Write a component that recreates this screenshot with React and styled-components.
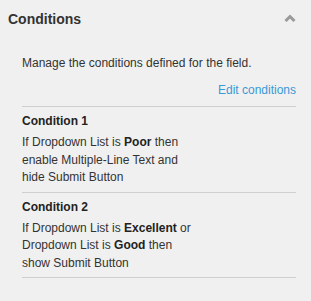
import React from 'react';
import styled, { createGlobalStyle } from 'styled-components';

const GlobalStyle = createGlobalStyle`
  body {
    margin: 0;
    background: #f0f0f0;
    font-family: "Liberation Sans", Arial, sans-serif;
    color: #333;
  }
`;

const Panel = styled.div`
  width: 311px;
  min-height: 301px;
  background: #f0f0f0;
`;

const Header = styled.div`
  display: flex;
  justify-content: space-between;
  align-items: flex-start;
  padding: 11px 15px 0 8px;
`;

const Title = styled.h2`
  margin: 0;
  font-size: 14px;
  line-height: 17px;
  font-weight: bold;
  color: #333;
`;

const Toggle = styled.svg`
  margin-top: 3px;
  display: block;
`;

const Body = styled.div`
  padding: 0 15px 0 22px;
`;

const Description = styled.p`
  margin: 27px 0 0;
  font-size: 12px;
  line-height: 17px;
`;

const Actions = styled.div`
  display: flex;
  justify-content: flex-end;
  margin-top: 10px;
`;

const EditLink = styled.a`
  font-size: 12px;
  line-height: 17px;
  color: #3b99d4;
  text-decoration: none;
  cursor: pointer;
`;

const List = styled.div`
  margin-top: 7px;
  border-bottom: 1px solid #cfcfcf;
`;

const Item = styled.div`
  border-top: 1px solid #cfcfcf;
  padding: 6px 0 5px;
`;

const ItemTitle = styled.div`
  font-size: 12px;
  line-height: 17px;
  font-weight: bold;
  color: #222;
`;

const ItemText = styled.div`
  margin-top: 4px;
  font-size: 12px;
  line-height: 17.5px;
  max-width: 175px;

  strong {
    color: #222;
  }
`;

const conditions = [
  {
    id: 1,
    text: (
      <>
        If Dropdown List is <strong>Poor</strong> then enable Multiple-Line Text and hide Submit Button
      </>
    ),
  },
  {
    id: 2,
    text: (
      <>
        If Dropdown List is <strong>Excellent</strong> or Dropdown List is <strong>Good</strong> then show Submit Button
      </>
    ),
  },
];

export default function App() {
  return (
    <Panel>
      <GlobalStyle />
      <Header>
        <Title>Conditions</Title>
        <Toggle width="12" height="8" viewBox="0 0 12 8">
          <polyline points="1.5,7 6,2.5 10.5,7" fill="none" stroke="#9a9a9a" strokeWidth="3" />
        </Toggle>
      </Header>
      <Body>
        <Description>Manage the conditions defined for the field.</Description>
        <Actions>
          <EditLink>Edit conditions</EditLink>
        </Actions>
        <List>
          {conditions.map(c => (
            <Item key={c.id}>
              <ItemTitle>Condition {c.id}</ItemTitle>
              <ItemText>{c.text}</ItemText>
            </Item>
          ))}
        </List>
      </Body>
    </Panel>
  );
}
